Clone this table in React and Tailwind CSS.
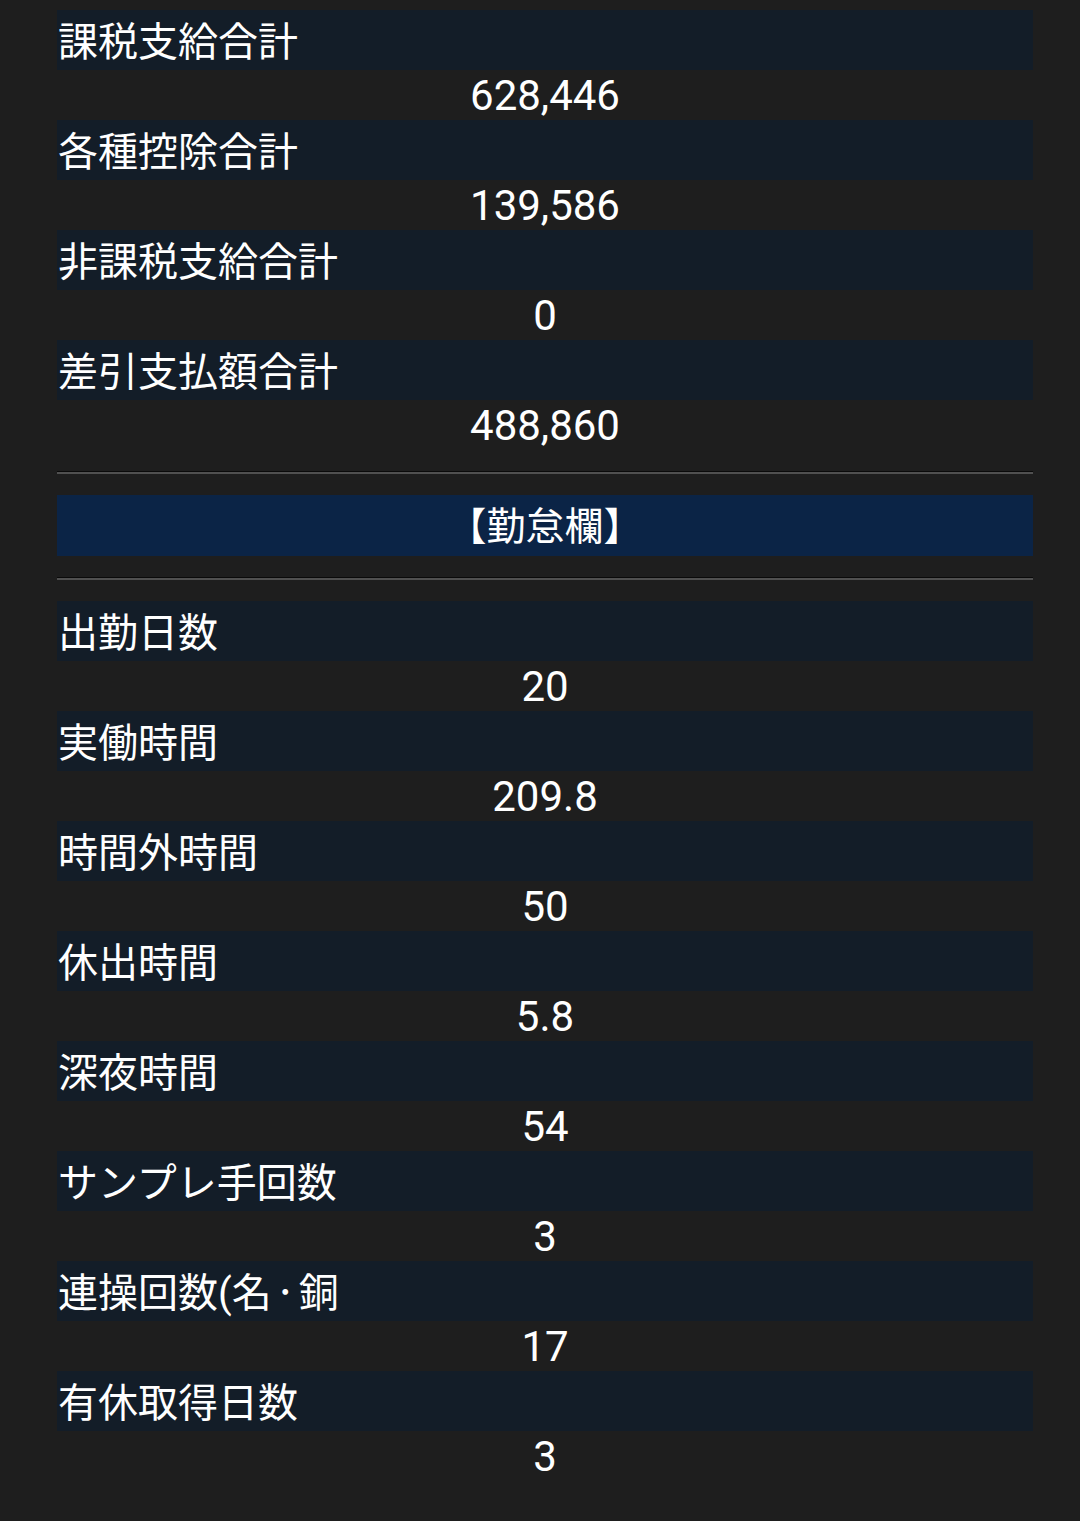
import React from "react";

const top = [
  ["課税支給合計", "628,446"],
  ["各種控除合計", "139,586"],
  ["非課税支給合計", "0"],
  ["差引支払額合計", "488,860"],
];
const bottom = [
  ["出勤日数", "20"],
  ["実働時間", "209.8"],
  ["時間外時間", "50"],
  ["休出時間", "5.8"],
  ["深夜時間", "54"],
  ["サンプレ手回数", "3"],
  [
    <>
      連操回数(名<span className="text-[27px] align-[5px]">・</span>銅
    </>,
    "17",
    "renso",
  ],
  ["有休取得日数", "3"],
];

function Row({ label, value }) {
  return (
    <div>
      <div className="h-[60px] bg-[#131d28] flex items-center pl-[1px] pt-[6px] text-[40px] leading-none text-white">
        <span>{label}</span>
      </div>
      <div className="h-[50px] flex items-center justify-center pt-[2px] text-[42px] leading-none text-white">
        {value}
      </div>
    </div>
  );
}

function Rule() {
  return <div className="h-[3px] border-t border-[#0a0a0a] bg-[#505050]" />;
}

export default function App() {
  return (
    <div
      className="min-h-[1521px] w-[1080px] bg-[#1e1e1e] pt-[10px]"
      style={{ fontFamily: "Roboto, 'Noto Sans CJK JP', sans-serif" }}
    >
      <div className="ml-[57px] w-[976px]">
        {top.map(([l, v]) => (
          <Row key={l} label={l} value={v} />
        ))}
        <div className="h-[21px]" />
        <Rule />
        <div className="h-[21px]" />
        <div className="h-[61px] bg-[#0b2446] flex items-center justify-center pt-[4px] text-[39px] leading-none text-white">
          【勤怠欄】
        </div>
        <div className="h-[21px]" />
        <Rule />
        <div className="h-[21px]" />
        {bottom.map(([l, v, k]) => (
          <Row key={k || l} label={l} value={v} />
        ))}
      </div>
    </div>
  );
}
